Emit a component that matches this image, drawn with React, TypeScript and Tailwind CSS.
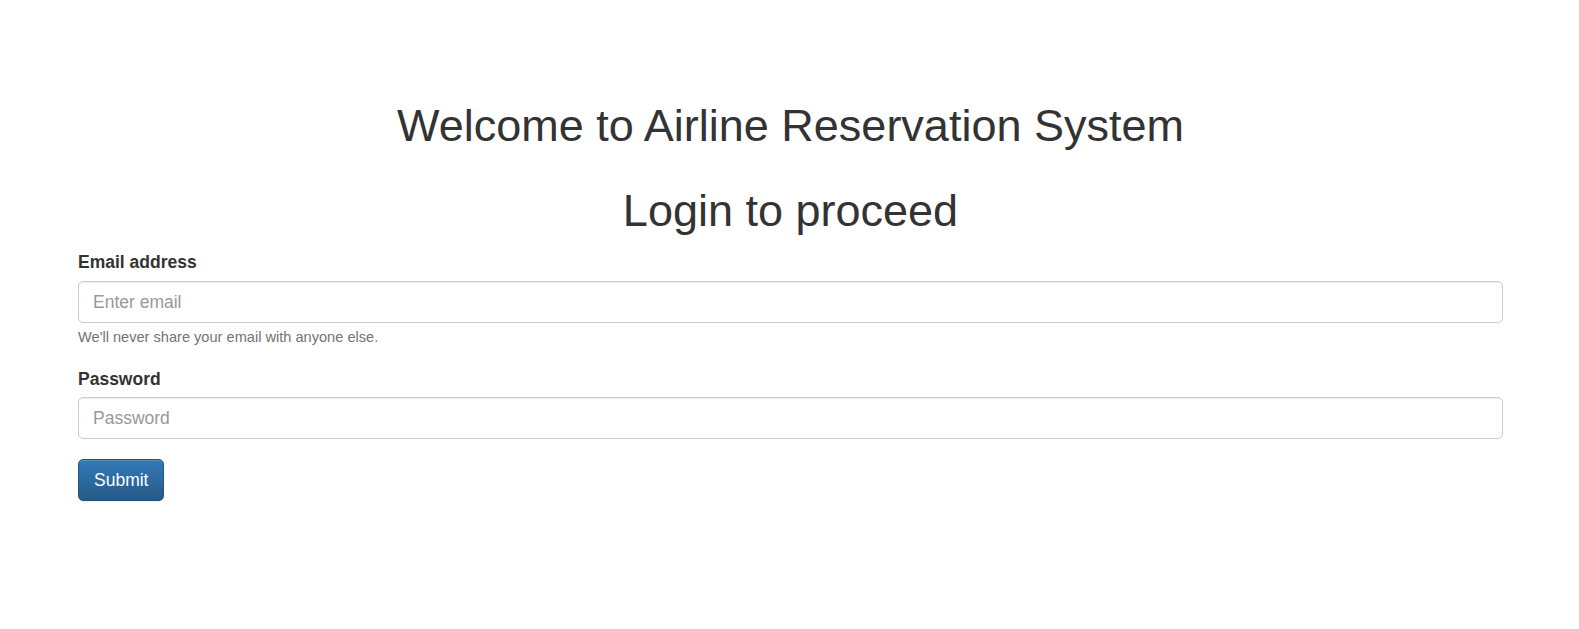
import React from 'react';

const FONT = { fontFamily: '"Liberation Sans", Arial, Helvetica, sans-serif' };

export default function App() {
  return (
    <div className="min-h-screen bg-white text-[#333]" style={FONT}>
      <div className="pl-[78px] pr-[76px] pt-[102px]">
        <h1 className="text-center text-[45px] leading-[47px] font-normal">
          Welcome to Airline Reservation System
        </h1>
        <h1 className="mt-[38px] text-center text-[45px] leading-[47px] font-normal">
          Login to proceed
        </h1>

        <form className="mt-[16px]" onSubmit={(e) => e.preventDefault()}>
          <div>
            <label className="mb-[7px] block text-[17.5px] leading-[24px] font-bold">Email address</label>
            <input
              type="email"
              placeholder="Enter email"
              className="block h-[42px] w-full rounded-[5px] border border-[#ccc] bg-white px-[14px] text-[17.5px] text-[#555] shadow-[inset_0_1px_1px_rgba(0,0,0,0.075)] outline-none placeholder:text-[#999]"
            />
            <small className="mt-[4px] block text-[14.6px] leading-[20.4px] text-[#737373]">
              We'll never share your email with anyone else.
            </small>
          </div>

          <div className="mt-[20px]">
            <label className="mb-[6px] block text-[17.5px] leading-[24px] font-bold">Password</label>
            <input
              type="password"
              placeholder="Password"
              className="block h-[42px] w-full rounded-[5px] border border-[#ccc] bg-white px-[14px] text-[17.5px] text-[#555] shadow-[inset_0_1px_1px_rgba(0,0,0,0.075)] outline-none placeholder:text-[#999]"
            />
          </div>

          <button
            type="submit"
            className="mt-[20px] h-[42px] rounded-[5px] border border-[#245580] bg-[linear-gradient(to_bottom,#337ab7_0%,#265a88_100%)] px-[15px] text-[17.5px] leading-[24px] text-white shadow-[inset_0_1px_0_rgba(255,255,255,0.15),0_1px_1px_rgba(0,0,0,0.075)]"
          >
            Submit
          </button>
        </form>
      </div>
    </div>
  );
}
